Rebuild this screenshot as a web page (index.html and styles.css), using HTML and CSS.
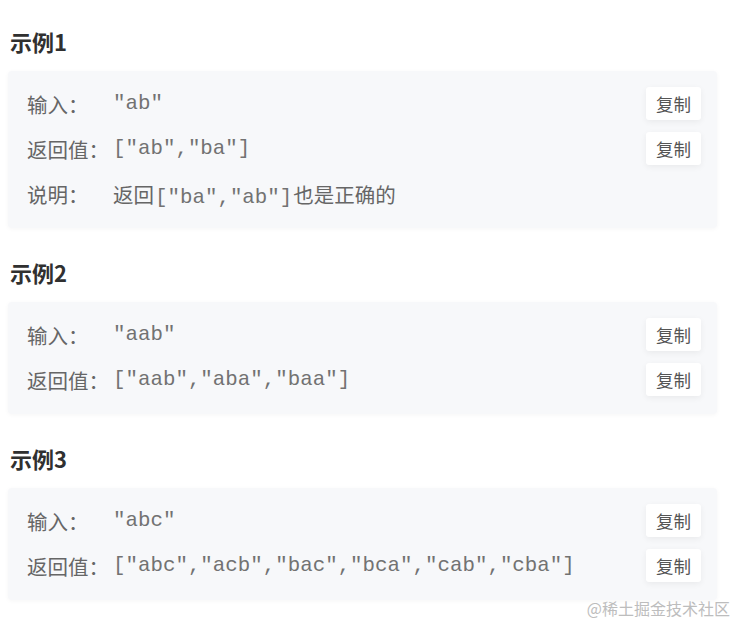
FILE: index.html
```html
<!DOCTYPE html>
<html lang="zh-CN">
<head>
<meta charset="utf-8">
<title>示例</title>
<link rel="stylesheet" href="styles.css">
</head>
<body>
<div class="page">
  <h3 class="ex-title first">示例1</h3>
  <div class="ex-card">
    <div class="ex-row">
      <span class="ex-label">输入：</span>
      <span class="ex-code">"ab"</span>
      <button class="copy-btn">复制</button>
    </div>
    <div class="ex-row">
      <span class="ex-label">返回值：</span>
      <span class="ex-code">["ab","ba"]</span>
      <button class="copy-btn">复制</button>
    </div>
    <div class="ex-row">
      <span class="ex-label">说明：</span>
      <span class="ex-desc">返回<span class="ex-code inline">["ba","ab"]</span>也是正确的</span>
    </div>
  </div>

  <h3 class="ex-title">示例2</h3>
  <div class="ex-card">
    <div class="ex-row">
      <span class="ex-label">输入：</span>
      <span class="ex-code">"aab"</span>
      <button class="copy-btn">复制</button>
    </div>
    <div class="ex-row">
      <span class="ex-label">返回值：</span>
      <span class="ex-code">["aab","aba","baa"]</span>
      <button class="copy-btn">复制</button>
    </div>
  </div>

  <h3 class="ex-title">示例3</h3>
  <div class="ex-card">
    <div class="ex-row">
      <span class="ex-label">输入：</span>
      <span class="ex-code">"abc"</span>
      <button class="copy-btn">复制</button>
    </div>
    <div class="ex-row">
      <span class="ex-label">返回值：</span>
      <span class="ex-code">["abc","acb","bac","bca","cab","cba"]</span>
      <button class="copy-btn">复制</button>
    </div>
  </div>
</div>
<div class="watermark">@稀土掘金技术社区</div>
</body>
</html>
```

FILE: styles.css
```css
html, body {
  margin: 0;
  padding: 0;
  background: #ffffff;
}

body {
  font-family: "Noto Sans CJK SC", "Noto Sans", "Liberation Sans", sans-serif;
  color: #666666;
  overflow: hidden;
  height: 624px;
  position: relative;
}

.page {
  width: 709px;
  padding-left: 8px;
}

.ex-title {
  margin: 29px 0 15px 2px;
  height: 30px;
  line-height: 30px;
  font-size: 22px;
  font-weight: 700;
  color: #303030;
}

.ex-title.first {
  margin-top: 26px;
}

.ex-card {
  background: #f7f8fa;
  border-radius: 4px;
  box-shadow: 0 1px 4px rgba(0, 0, 0, 0.04);
  padding: 10px 16px 12px 19px;
}

.ex-row {
  display: flex;
  align-items: center;
  height: 45px;
}

.ex-label {
  width: 86px;
  flex: none;
  font-size: 20.5px;
  color: #666666;
  white-space: nowrap;
}

.ex-code {
  font-family: "Liberation Mono", "DejaVu Sans Mono", monospace;
  font-size: 20.8px;
  color: #727272;
  white-space: pre;
}

.ex-code.inline {
  margin: 0 1px;
}

.ex-desc {
  font-size: 20.5px;
  color: #666666;
  white-space: nowrap;
}

.copy-btn {
  margin-left: auto;
  width: 55px;
  height: 33px;
  border: none;
  background: #ffffff;
  border-radius: 3px;
  box-shadow: 0 2px 6px rgba(0, 0, 0, 0.06);
  font-family: "Noto Sans CJK SC", sans-serif;
  font-size: 17.5px;
  color: #555555;
  padding: 0;
  line-height: 33px;
}

.watermark {
  position: absolute;
  right: 6px;
  top: 597px;
  font-family: "Noto Sans CJK SC", sans-serif;
  font-size: 16px;
  line-height: 22px;
  color: #bdbdbd;
}
```
